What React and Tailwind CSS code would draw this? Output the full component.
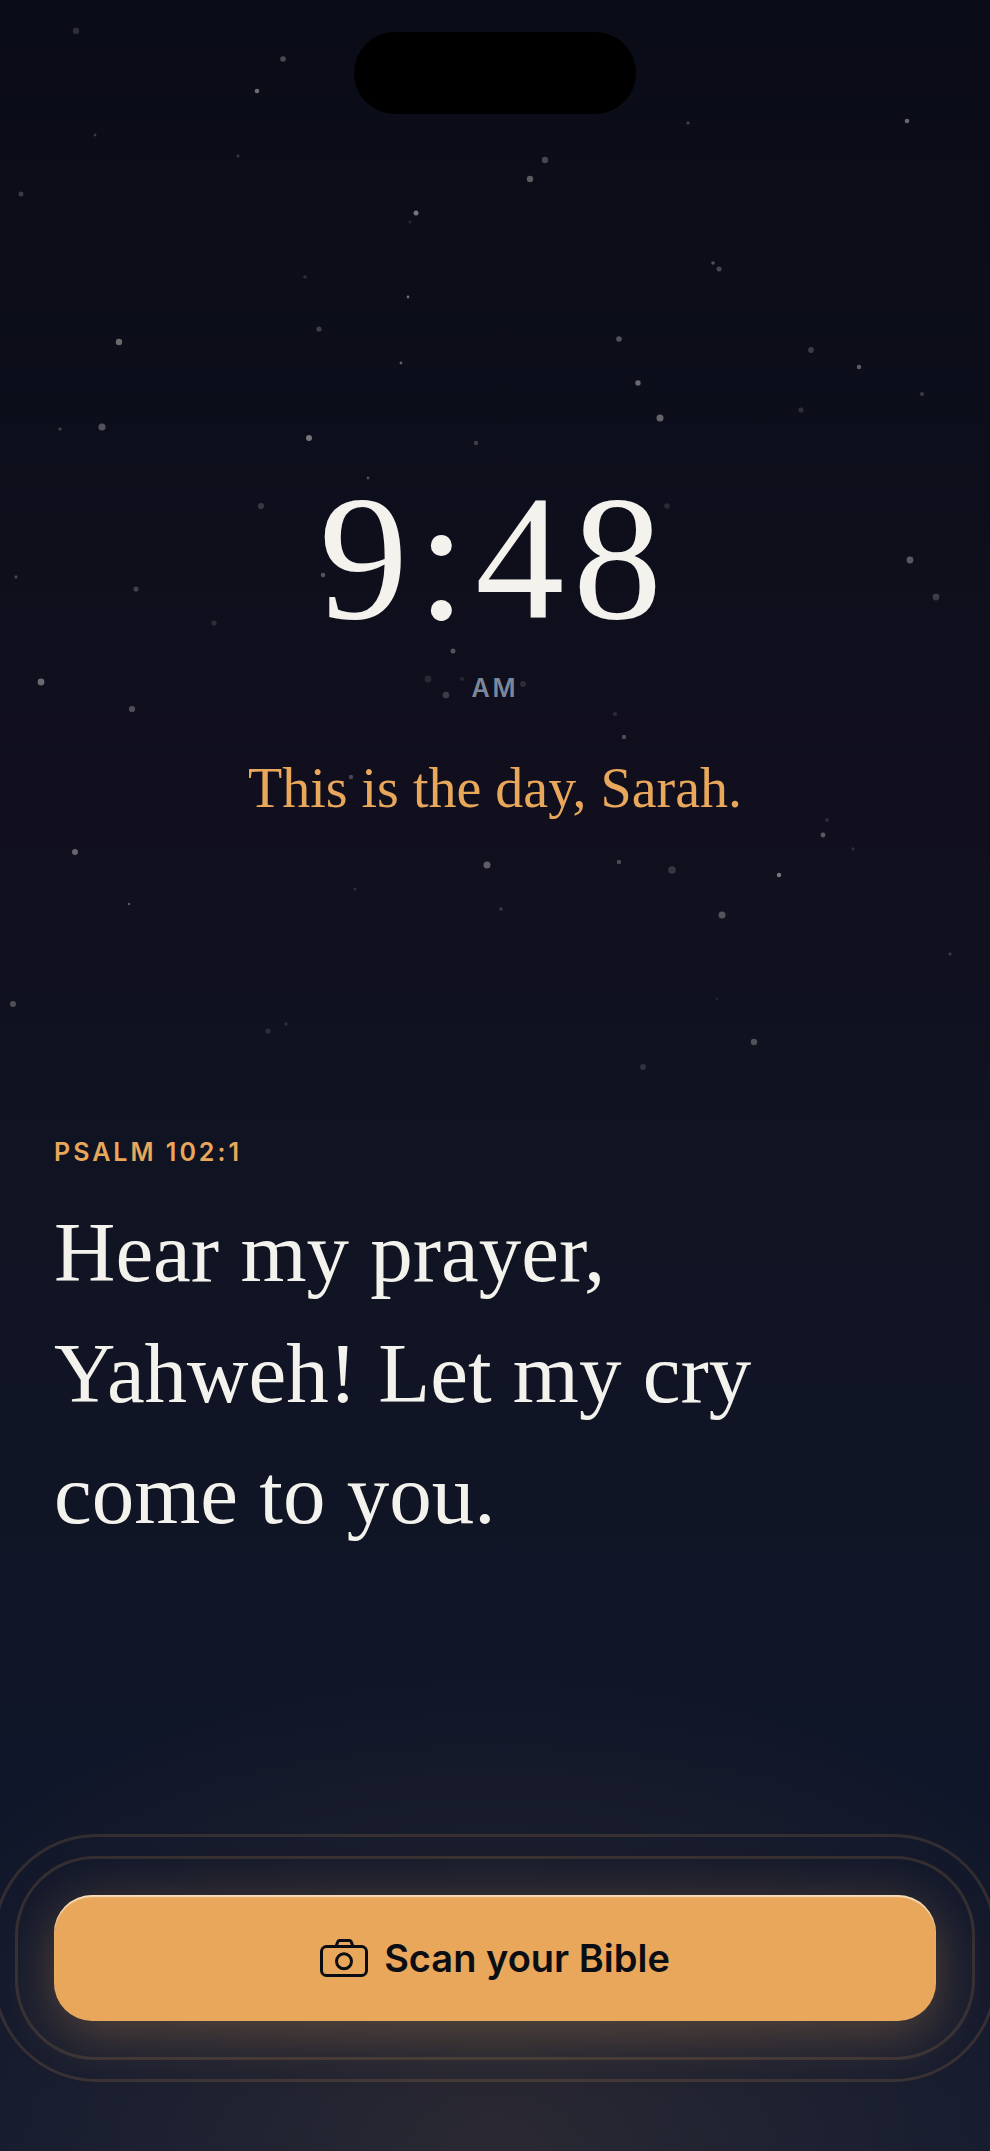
import React from 'react';

// [x, y, radius, opacity] on a 990 x 1100 sky
const stars = [
  [76, 31, 3.2, 0.15], [283, 59, 2.8, 0.27], [257, 91, 2.3, 0.42], [688, 123, 1.5, 0.25], [907, 121, 2.3, 0.4],
  [95, 135, 1.4, 0.2], [238, 156, 1.4, 0.2], [545, 160, 3.2, 0.25], [530, 179, 3.2, 0.34], [21, 194, 2.5, 0.2],
  [416, 213, 2.5, 0.45], [410, 222, 1.5, 0.12], [713, 263, 1.8, 0.3], [719, 269, 2.5, 0.25], [305, 277, 1.8, 0.15],
  [408, 297, 1.4, 0.42], [319, 329, 2.6, 0.22], [119, 342, 3.2, 0.4], [619, 339, 2.8, 0.3], [811, 350, 2.9, 0.2],
  [401, 363, 1.4, 0.36], [859, 367, 2.2, 0.35], [638, 383, 2.7, 0.4], [922, 394, 2, 0.2], [801, 410, 2.6, 0.15],
  [660, 418, 3.5, 0.38], [60, 429, 1.8, 0.2], [102, 427, 3.6, 0.3], [309, 438, 3, 0.45], [476, 443, 2.2, 0.22],
  [368, 478, 1.4, 0.3], [261, 506, 3.1, 0.18], [667, 506, 2.8, 0.12], [910, 560, 3.4, 0.32], [936, 597, 3.4, 0.2],
  [16, 577, 1.8, 0.22], [136, 589, 2.6, 0.22], [323, 575, 2.3, 0.3], [214, 623, 2.6, 0.13], [453, 651, 2.5, 0.3],
  [41, 682, 3.4, 0.4], [428, 679, 3.4, 0.11], [446, 695, 3.3, 0.2], [462, 679, 2, 0.1], [523, 684, 3, 0.12],
  [132, 709, 3.1, 0.28], [615, 714, 2, 0.13], [624, 737, 2.2, 0.28], [351, 777, 2.2, 0.25], [827, 820, 2, 0.12],
  [823, 835, 2.4, 0.32], [75, 852, 3, 0.38], [487, 865, 3.5, 0.34], [619, 862, 2.3, 0.25], [672, 870, 3.8, 0.17],
  [779, 875, 2.2, 0.45], [853, 849, 1.8, 0.12], [355, 889, 1.6, 0.12], [129, 904, 1.3, 0.3], [501, 909, 1.8, 0.18],
  [722, 915, 3.5, 0.3], [950, 954, 1.4, 0.2], [13, 1004, 3, 0.27], [717, 999, 1.4, 0.08], [268, 1031, 2.6, 0.12],
  [286, 1024, 1.7, 0.12], [754, 1042, 3.2, 0.28], [643, 1067, 2.9, 0.15],
];

const StarField = () => (
  <svg viewBox="0 0 990 1100" aria-hidden="true" className="absolute inset-x-0 top-0 w-full">
    {stars.map(([x, y, r, opacity]) => (
      <circle key={`${x}-${y}`} cx={x} cy={y} r={r} fill="#f5f3ee" opacity={opacity} />
    ))}
  </svg>
);

const CameraIcon = () => (
  <svg
    viewBox="0 0 48 38"
    fill="none"
    stroke="currentColor"
    strokeWidth="3"
    strokeLinejoin="round"
    aria-hidden="true"
    className="w-12 shrink-0"
  >
    <rect x="1.5" y="7.5" width="45" height="29" rx="5" />
    <path d="M15.6 8.2 18 2.4Q18.4 1.5 19.4 1.5H29.6Q30.6 1.5 31 2.4L33.4 8.2" />
    <circle cx="24" cy="22.3" r="7.5" />
  </svg>
);

const App = () => {
  return (
    <div className="relative flex min-h-screen flex-col overflow-hidden bg-[linear-gradient(to_bottom,#0a0c17,#0d0e1b_20%,#110f1e_38%,#101321_52%,#10182e)] font-['Inter',sans-serif]">
      {/* Warm light rising from below the button */}
      <div className="absolute inset-x-0 bottom-0 h-[480px] bg-[radial-gradient(ellipse_70%_100%_at_50%_100%,rgba(232,166,90,0.12),rgba(232,166,90,0.06)_50%,transparent)]"></div>
      <StarField />

      <header className="relative flex justify-center pt-8">
        <div className="h-[82px] w-[282px] rounded-full bg-black"></div>
      </header>

      <main className="relative flex grow flex-col">
        <section className="flex flex-col items-center pt-[356px] text-center">
          <time className="font-['Liberation_Serif',serif] text-[178px] leading-[176px] tracking-wider text-[#f4f2ec]">
            9:48
          </time>
          <p className="mt-[26px] text-[25px] leading-8 font-semibold tracking-[3px] text-[#7c879b]">AM</p>
          <p className="mt-12 font-['Liberation_Serif',serif] text-[56px] leading-[72px] text-[#e8a75a]">
            This is the day, Sarah.
          </p>
        </section>

        <section className="px-[54px] pt-[312px]">
          <h2 className="text-[25px] leading-8 font-semibold tracking-[3px] text-[#e8a75a]">PSALM 102:1</h2>
          <p className="mt-6 max-w-[780px] font-['Liberation_Serif',serif] text-[85px] leading-[121px] text-[#f4f2ec]">
            Hear my prayer, Yahweh! Let my cry come to you.
          </p>
        </section>
      </main>

      <footer className="relative px-[54px] pb-[130px]">
        <div className="relative">
          {/* Pulse rings */}
          <div className="absolute -inset-[39px] rounded-[80px] border-3 border-[#e8a75a]/15"></div>
          <div className="absolute -inset-[61px] rounded-[104px] border-3 border-[#e8a75a]/15"></div>
          <button
            type="button"
            className="relative flex h-[126px] w-full cursor-pointer items-center justify-center gap-4 rounded-[38px] bg-[#e8a75a] text-[38px] font-semibold text-[#0b0d14] shadow-[inset_0_2px_1px_rgba(255,255,255,0.6),0_12px_54px_rgba(232,167,90,0.3)]"
          >
            <CameraIcon />
            Scan your Bible
          </button>
        </div>
      </footer>
    </div>
  );
};

export default App;
